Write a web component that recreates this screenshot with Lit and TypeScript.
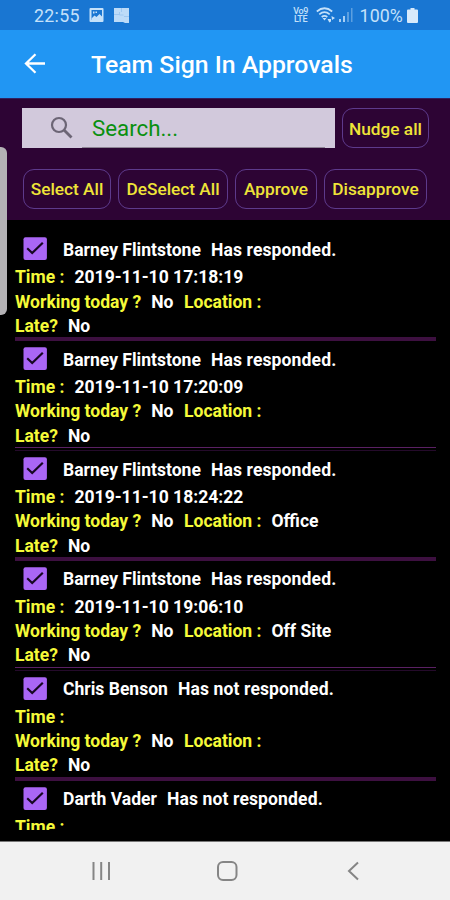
import { LitElement, html, css, nothing } from "lit";
import { customElement, property } from "lit/decorators.js";

interface Entry {
  name: string;
  status: string;
  time: string;
  working?: string;
  location?: string;
  late?: string;
}

const ENTRIES: Entry[] = [
  { name: "Barney Flintstone", status: "Has responded.", time: "2019-11-10 17:18:19", working: "No", location: "", late: "No" },
  { name: "Barney Flintstone", status: "Has responded.", time: "2019-11-10 17:20:09", working: "No", location: "", late: "No" },
  { name: "Barney Flintstone", status: "Has responded.", time: "2019-11-10 18:24:22", working: "No", location: "Office", late: "No" },
  { name: "Barney Flintstone", status: "Has responded.", time: "2019-11-10 19:06:10", working: "No", location: "Off Site", late: "No" },
  { name: "Chris Benson", status: "Has not responded.", time: "", working: "No", location: "", late: "No" },
  { name: "Darth Vader", status: "Has not responded.", time: "" },
];

@customElement("status-bar")
export class StatusBar extends LitElement {
  static styles = css`
    :host { display: flex; align-items: center; height: 30px; box-sizing: border-box; padding: 0 32px 0 34px; background: #1976d2; color: #c5e1fa; font-size: 17.8px; }
    .clock { width: 46px; margin-right: 9px; letter-spacing: 0.3px; }
    .pic { margin-right: 8px; }
    .grow { flex: 1; }
    .volte { display: flex; flex-direction: column; width: 16px; margin-right: 7px; font-size: 9px; line-height: 8px; font-weight: 500; text-align: center; letter-spacing: -0.3px; }
    .wifi { margin-right: 3px; }
    .signal { margin-right: 7px; }
    .pct { margin-right: 4px; letter-spacing: 0.1px; }
    svg { display: block; flex: none; }
  `;
  render() {
    return html`
      <span class="clock">22:55</span>
      <svg class="pic" width="16" height="16" viewBox="0 0 16 16">
        <path fill="#c5e1fa" fill-rule="evenodd" d="M1.500 1h12q1 0 1 1v12q0 1-1 1h-12q-1 0-1-1V2q0-1 1-1zM2.500 3v10h10.500V3z"/>
        <path fill="#c5e1fa" d="M2.500 11.500l3-3 2 1.500L10.500 7 13 9.500V13H2.500z"/><path fill="#c5e1fa" d="M4 4.500h1.500v2H4zM6.500 4.500H8V6H6.500z"/>
      </svg>
      <svg width="17" height="17" viewBox="0 0 17 17">
        <path fill="#bddbf8" d="M1 1h15v15h-4l-2-1H1z"/>
        <path stroke="#9fc8f1" fill="none" d="M1 7.500h5M8.500 1v4M11 9.500h5M6.500 5v3h4"/>
      </svg>
      <span class="grow"></span>
      <span class="volte"><span>Vo9</span><span>LTE</span></span>
      <svg class="wifi" width="20" height="16" viewBox="0 0 20 16">
        <g fill="none" stroke="#c5e1fa" stroke-width="1.700"><path d="M.800 4.500Q8.500-2 16.200 4.500M3.300 7.300Q8.500 3 13.700 7.300M5.700 10Q8.500 7.700 11.300 10"/></g>
        <path fill="#c5e1fa" d="M6.500 11h4l-2 2.500zM11.500 12h3.500v2.500l-1.700 1zM15.500 9l3.500 2-3 2z"/>
      </svg>
      <svg class="signal" width="14" height="15" viewBox="0 0 14 15">
        <path fill="#a8cff4" d="M0 11h2v3H0zM4 8h2v6H4z"/><path fill="#5c9fe0" d="M8 4h2v10H8zM12 0h1.500v14H12z"/>
      </svg>
      <span class="pct">100%</span>
      <svg width="11" height="15" viewBox="0 0 11 15"><path fill="#d8eafb" d="M3.500 0h4v1.500H10q1 0 1 1V14q0 1-1 1H1q-1 0-1-1V2.500q0-1 1-1h2.500z"/></svg>
    `;
  }
}

@customElement("approval-entry")
export class ApprovalEntry extends LitElement {
  @property({ attribute: false }) entry!: Entry;
  @property({ type: Boolean }) thin = false;
  static styles = css`
    :host { display: block; height: 109.86px; box-sizing: border-box; margin: 0 14px 0 15px; font-size: 17.550px; font-weight: 700; color: #fff; }
    .head { display: flex; align-items: center; height: 32px; padding-left: 8px; }
    .box { display: block; margin-right: 16px; flex: none; }
    .name { margin-right: 10px; padding-top: 1px; }
    .status { padding-top: 1px; letter-spacing: 0.120px; }
    .line { display: flex; height: 24.300px; line-height: 25.300px; white-space: pre; }
    .label { color: #f5fa38; margin-right: 10px; }
    .value { margin-right: 10.500px; }
    .rule { height: 4px; margin-top: -1px; background: #3d1040; }
    .rule.split { height: 1px; background: #5a2063; box-shadow: 0 3px #240a2a; }
  `;
  render() {
    const e = this.entry;
    return html`
      <div class="head">
        <svg class="box" width="24" height="24" viewBox="0 0 24 24">
          <rect x=".500" y=".300" width="23.400" height="22.800" rx="2" fill="#aa66f5"/>
          <path d="M4.200 11.300l5 4.700L19.800 5.700" fill="none" stroke="#180822" stroke-width="2.200"/>
        </svg>
        <span class="name">${e.name}</span><span class="status">${e.status}</span>
      </div>
      <div class="line"><span class="label">Time :</span><span class="value">${e.time}</span></div>
      ${e.working === undefined ? nothing : html`
        <div class="line"><span class="label">Working today ?</span><span class="value">${e.working}</span><span class="label">Location :</span><span>${e.location}</span></div>
        <div class="line"><span class="label">Late?</span><span>${e.late}</span></div>
        <div class="rule ${this.thin ? "split" : ""}"></div>
      `}
    `;
  }
}

@customElement("app-root")
export class AppRoot extends LitElement {
  static styles = css`
    :host { display: flex; flex-direction: column; position: relative; width: 450px; height: 900px; overflow: hidden; background: #000; font-family: Roboto, "Liberation Sans", sans-serif; }
    .bar { display: flex; align-items: center; height: 68px; box-sizing: border-box; padding: 0 0 0 24px; background: #2196f3; color: #fff; }
    .back { margin-right: 45px; }
    h1 { margin: 0; font-size: 24.800px; font-weight: 500; white-space: nowrap; }
    .tools { height: 122px; box-sizing: border-box; padding: 9px 21px 0 22px; background: #2d0434; border-top: 1px solid #302060; }
    .row { display: flex; height: 40px; }
    .search { display: flex; align-items: center; width: 312.500px; height: 40px; box-sizing: border-box; margin-right: 7.500px; padding: 0 10px 0 27px; background: #d2c9dc; color: #0a900f; font-size: 22.300px; }
    .search svg { margin-right: 7px; }
    .field { flex: 1; height: 40px; line-height: 41px; box-sizing: border-box; padding-left: 10px; border-bottom: 1px solid #8d8494; }
    .actions { margin-top: 21px; padding-left: 1px; gap: 7px; }
    button { box-sizing: border-box; height: 40px; padding: 0; border: 1.500px solid #5d3a8c; border-radius: 11px; background: transparent; color: #efe438; font: 500 17.250px Roboto, sans-serif; white-space: nowrap; }
    .nudge { width: 87px; padding-top: 1px; } .select { width: 88px; } .deselect { width: 110px; } .approve { width: 82px; } .disapprove { width: 103px; }
    .list { height: 610px; padding-top: 13.300px; box-sizing: border-box; overflow: hidden; }
    .nav { display: flex; align-items: center; margin-top: auto; height: 59px; background: #f1f1f1; border-top: 1px solid #777; box-sizing: border-box; }
    .nav svg { display: block; }
    .handle { position: absolute; left: 0; top: 147px; width: 7px; height: 168px; border-radius: 0 6px 6px 0; background: #b4b2b5; }
  `;
  render() {
    return html`
      <status-bar></status-bar>
      <header class="bar">
        <svg class="back" width="22" height="22" viewBox="0 0 22 22"><path d="M21 10.500H2.500M11.500 1.200L2 10.500l9.500 9.300" fill="none" stroke="#fff" stroke-width="2.300"/></svg>
        <h1>Team Sign In Approvals</h1>
      </header>
      <section class="tools">
        <div class="row">
          <div class="search">
            <svg width="26" height="26" viewBox="0 0 26 26"><g fill="none" stroke="#6c6575"><circle cx="10" cy="10" r="7" stroke-width="2.200"/><path d="M15 15l7.500 7.500" stroke-width="2.800"/></g></svg>
            <span class="field">Search...</span>
          </div>
          <button class="nudge">Nudge all</button>
        </div>
        <div class="row actions">
          <button class="select">Select All</button>
          <button class="deselect">DeSelect All</button>
          <button class="approve">Approve</button>
          <button class="disapprove">Disapprove</button>
        </div>
      </section>
      <main class="list">${ENTRIES.map((e, i) => html`<approval-entry .entry=${e} ?thin=${i % 2 === 1}></approval-entry>`)}</main>
      <nav class="nav">
        <svg width="450" height="58" viewBox="0 0 450 58"><g fill="none" stroke="#858585" stroke-width="2">
          <path d="M93.500 20v18M101.200 20v18M109 20v18"/><rect x="218" y="20" width="18.500" height="18" rx="5"/><path d="M358 20.500L349 29l9 8.500"/>
        </g></svg>
      </nav>
      <div class="handle"></div>
    `;
  }
}
